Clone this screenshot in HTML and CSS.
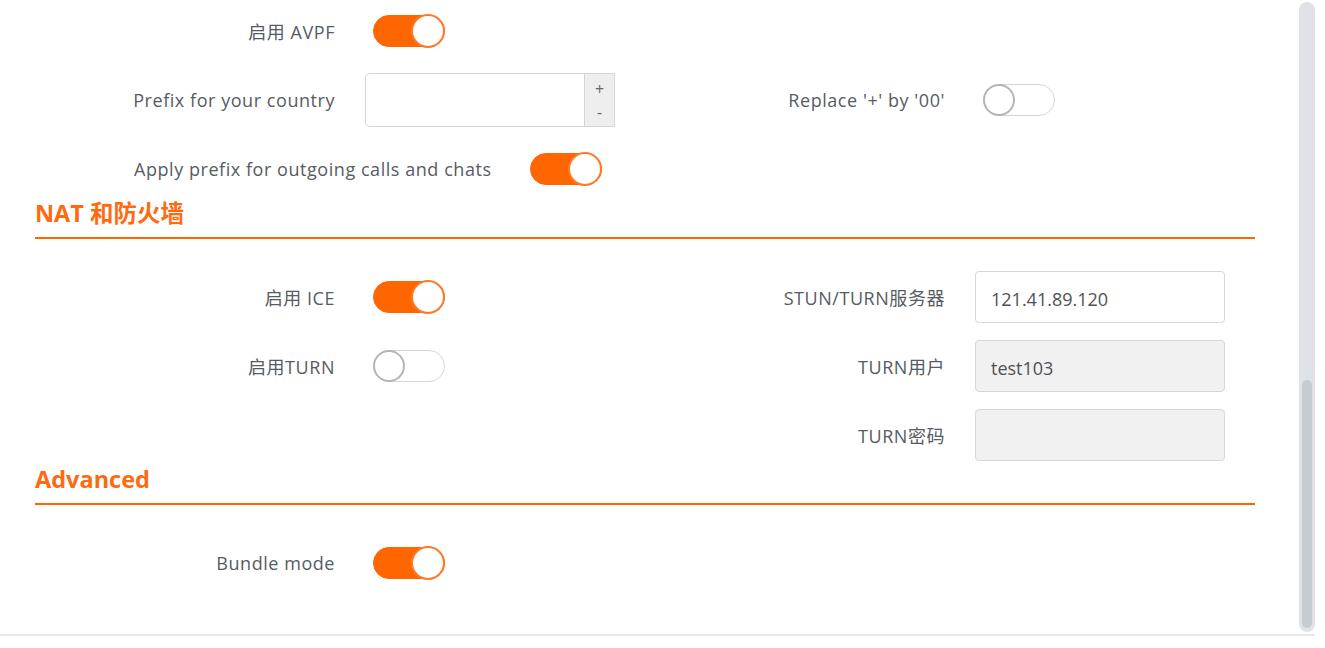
FILE: index.html
```html
<!DOCTYPE html>
<html lang="zh">
<head>
<meta charset="utf-8">
<title>Settings</title>
<link rel="stylesheet" href="styles.css">
</head>
<body>
<div class="frame">
  <div class="content">
    <div class="grid grid-top">
      <label class="lbl">启用 AVPF</label>
      <div class="ctl"><span class="toggle on"><span class="knob"></span></span></div>
      <span></span><span></span>

      <label class="lbl">Prefix for your country</label>
      <div class="ctl">
        <div class="number">
          <span class="number-field"></span>
          <span class="spin"><span>+</span><span>-</span></span>
        </div>
      </div>
      <label class="lbl">Replace '+' by '00'</label>
      <div class="ctl"><span class="toggle"><span class="knob"></span></span></div>

      <div class="wide-row">
        <label class="lbl-wide">Apply prefix for outgoing calls and chats</label>
        <span class="toggle on"><span class="knob"></span></span>
      </div>
    </div>

    <h2 class="section-title">NAT 和防火墙</h2>

    <div class="grid">
      <label class="lbl">启用 ICE</label>
      <div class="ctl"><span class="toggle on"><span class="knob"></span></span></div>
      <label class="lbl">STUN/TURN服务器</label>
      <div class="ctl"><div class="field">121.41.89.120</div></div>

      <label class="lbl">启用TURN</label>
      <div class="ctl"><span class="toggle"><span class="knob"></span></span></div>
      <label class="lbl">TURN用户</label>
      <div class="ctl"><div class="field disabled">test103</div></div>

      <span></span><span></span>
      <label class="lbl">TURN密码</label>
      <div class="ctl"><div class="field disabled"></div></div>
    </div>

    <h2 class="section-title">Advanced</h2>

    <div class="grid">
      <label class="lbl">Bundle mode</label>
      <div class="ctl"><span class="toggle on"><span class="knob"></span></span></div>
      <span></span><span></span>
    </div>
  </div>
  <div class="scrollbar"><div class="thumb"></div></div>
</div>
</body>
</html>
```

FILE: styles.css
```css
html, body {
  margin: 0;
  padding: 0;
  background: #ffffff;
}

body {
  font-family: "Open Sans", "Noto Sans", "Noto Sans CJK SC", sans-serif;
  color: #565c63;
  width: 1325px;
  height: 648px;
  overflow: hidden;
}

.frame {
  display: flex;
  width: 1315px;
  height: 634px;
  border-bottom: 2px solid #e6e7e9;
}

.content {
  flex: 1;
  padding: 5px 0 0 35px;
  width: 1220px;
  box-sizing: border-box;
}

.grid {
  display: grid;
  grid-template-columns: 300px 275px 275px 250px;
  grid-auto-rows: 52px;
  column-gap: 30px;
  row-gap: 17px;
  width: 1220px;
}

.lbl {
  display: flex;
  align-items: center;
  justify-content: flex-end;
  font-size: 18px;
  letter-spacing: 0.55px;
  white-space: nowrap;
  color: #565c63;
}

.ctl {
  display: flex;
  align-items: center;
}

.wide-row {
  grid-column: 1 / -1;
  display: flex;
  align-items: center;
  padding-left: 99px;
}

.lbl-wide {
  font-size: 18px;
  letter-spacing: 0.55px;
  white-space: nowrap;
  margin-right: 38px;
}

/* toggles */
.toggle {
  display: flex;
  align-items: center;
  width: 72px;
  height: 32px;
  margin-left: 8px;
  border-radius: 16px;
  box-sizing: border-box;
  border: 1px solid #d6d6d6;
  background: #ffffff;
}

.wide-row .toggle {
  margin-left: 0;
}

.toggle .knob {
  width: 32px;
  height: 32px;
  margin-left: -1px;
  border-radius: 50%;
  box-sizing: border-box;
  border: 2px solid #b5b5b5;
  background: #ffffff;
}

.toggle.on {
  background: #ff6600;
  border-color: #ff6600;
  justify-content: flex-end;
}

.toggle.on .knob {
  margin-left: 0;
  margin-right: -1px;
  border-color: #ff7a26;
  width: 34px;
  height: 34px;
}

/* number input */
.number {
  display: flex;
  width: 250px;
  height: 54px;
  box-sizing: border-box;
  border: 1px solid #d6d6d6;
  border-radius: 5px 0 0 5px;
  background: #ffffff;
}

.number-field {
  flex: 1;
}

.spin {
  width: 29px;
  display: flex;
  flex-direction: column;
  justify-content: space-around;
  align-items: center;
  background: #eeeeee;
  border-left: 1px solid #d6d6d6;
  font-size: 16px;
  line-height: 1;
  color: #666;
  padding: 3px 0;
}

/* text fields */
.field {
  width: 250px;
  height: 52px;
  box-sizing: border-box;
  border: 1px solid #d6d6d6;
  border-radius: 4px;
  padding: 4px 15px 0;
  display: flex;
  align-items: center;
  font-size: 18px;
  color: #4d5257;
  background: #ffffff;
}

.field.disabled {
  background: #f1f1f1;
}

.section-title {
  margin: 0 0 32px 0;
  width: 1220px;
  padding: 5px 0 11px 0;
  line-height: 26px;
  font-size: 23.5px;
  font-weight: 700;
  color: #ff6a10;
  border-bottom: 2px solid #ff6600;
}

/* scrollbar */
.scrollbar {
  width: 16px;
  margin: 2px 0 2px 0;
  padding: 0 3px 4px;
  box-sizing: border-box;
  background: #dfe2e6;
  border-radius: 8px;
  display: flex;
  flex-direction: column;
  justify-content: flex-end;
}

.thumb {
  height: 248px;
  background: #c7cbd2;
  border-radius: 6px;
}
```
